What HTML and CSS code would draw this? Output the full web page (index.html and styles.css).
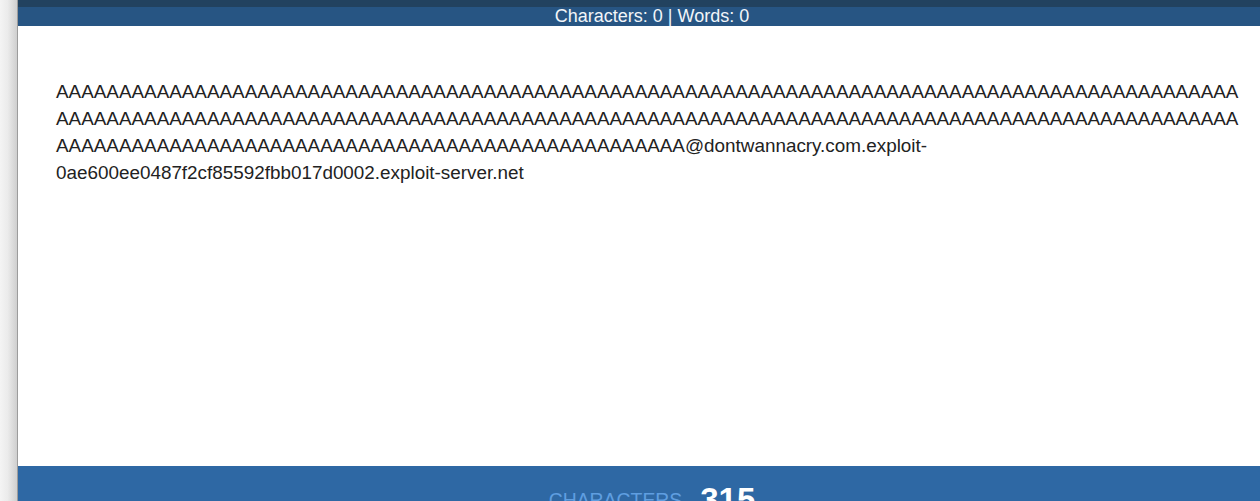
FILE: index.html
```html
<!DOCTYPE html>
<html lang="en">
<head>
<meta charset="utf-8">
<title>Character counter</title>
<link rel="stylesheet" href="styles.css">
</head>
<body>
<div class="shell">
  <aside class="edge"></aside>
  <main class="app">
    <header class="topbar">
      <div class="topbar-strip"></div>
      <div class="topbar-count">Characters: 0 | Words: 0</div>
    </header>
    <section class="editor">
      <p class="editor-text">AAAAAAAAAAAAAAAAAAAAAAAAAAAAAAAAAAAAAAAAAAAAAAAAAAAAAAAAAAAAAAAAAAAAAAAAAAAAAAAAAAAAAAAAAAAAAAAAAAAAAAAAAAAAAAAAAAAAAAAAAAAAAAAAAAAAAAAAAAAAAAAAAAAAAAAAAAAAAAAAAAAAAAAAAAAAAAAAAAAAAAAAAAAAAAAAAAAAAAAAAAAAAAAAAAAAAAAAAAAAAAAAAAAAAAAAAAAAAA@dontwannacry.com.exploit-0ae600ee0487f2cf85592fbb017d0002.exploit-server.net</p>
    </section>
    <footer class="stats">
      <div class="stats-row">
        <span class="stats-label">CHARACTERS</span>
        <span class="stats-value">315</span>
      </div>
    </footer>
  </main>
</div>
</body>
</html>
```

FILE: styles.css
```css
html, body {
  margin: 0;
  padding: 0;
  height: 100%;
  overflow: hidden;
  background: #ffffff;
  font-family: "Liberation Sans", Arial, sans-serif;
}

.shell {
  display: flex;
  height: 100%;
}

.edge {
  flex: 0 0 17px;
  background: linear-gradient(to right, #f4f4f4 0%, #ebebeb 45%, #cfcfcf 100%);
  border-right: 1px solid #9c9c9c;
}

.app {
  flex: 1;
  display: flex;
  flex-direction: column;
  min-width: 0;
}

.topbar {
  display: flex;
  flex-direction: column;
}

.topbar-strip {
  height: 7px;
  background: #22425f;
}

.topbar-count {
  height: 19px;
  line-height: 19px;
  background: #275583;
  color: #f2f5f9;
  font-size: 18px;
  text-align: center;
  padding-left: 26px;
  white-space: nowrap;
  overflow: hidden;
}

.editor {
  flex: 0 0 440px;
  padding: 52px 16px 0 38px;
  box-sizing: border-box;
  overflow: hidden;
}

.editor-text {
  margin: 0;
  font-size: 18.86px;
  line-height: 27px;
  color: #222222;
  overflow-wrap: break-word;
}

.stats {
  flex: 0 0 80px;
  background: #2e68a4;
  padding-top: 15px;
  padding-left: 26px;
}

.stats-row {
  display: flex;
  justify-content: center;
  align-items: center;
  gap: 18px;
}

.stats-label {
  font-size: 19.4px;
  color: #5f9ee0;
}

.stats-value {
  font-size: 33px;
  font-weight: bold;
  color: #ffffff;
}
```
